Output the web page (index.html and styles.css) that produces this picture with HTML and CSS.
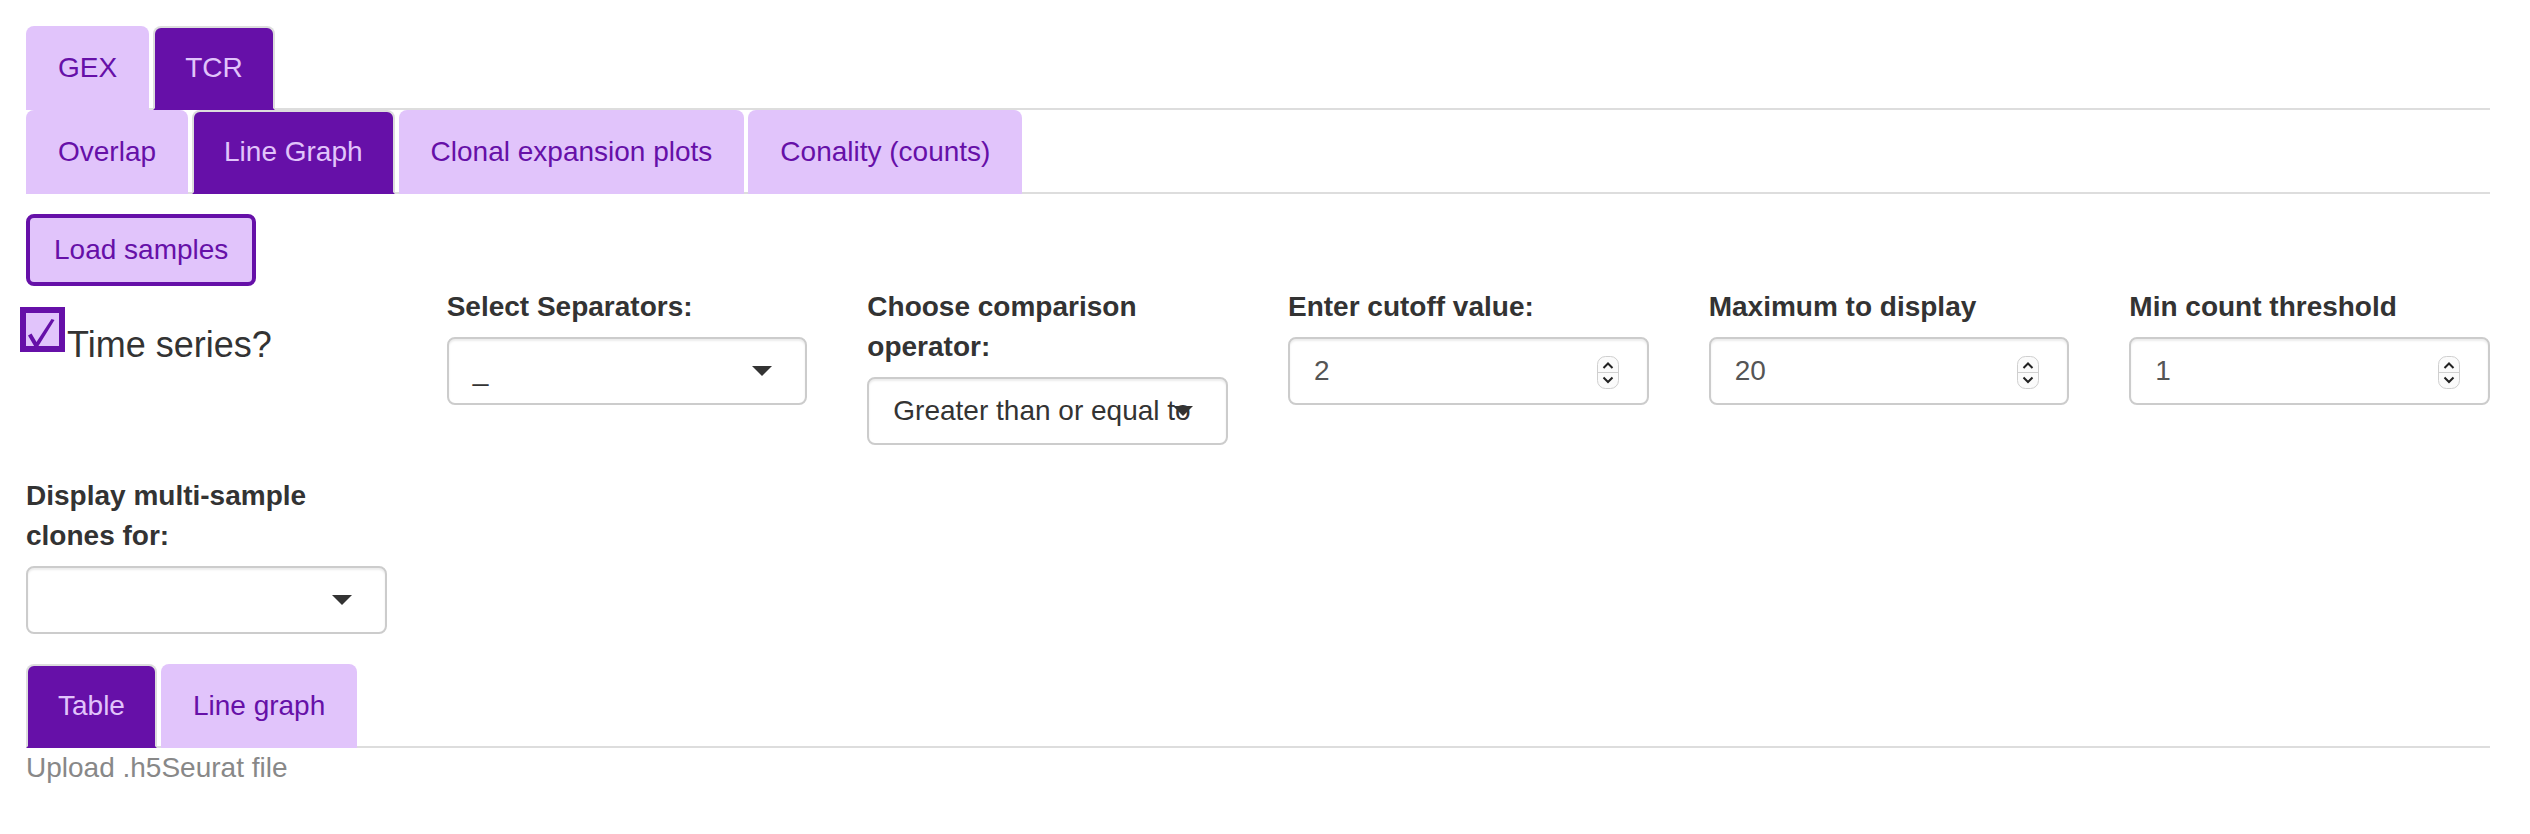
FILE: index.html
```html
<!DOCTYPE html>
<html lang="en">
<head>
<meta charset="utf-8">
<title>TCR Line Graph</title>
<link rel="stylesheet" href="styles.css">
</head>
<body>
<div class="page">
  <ul class="tabs">
    <li class="tab"><a>GEX</a></li>
    <li class="tab active"><a>TCR</a></li>
  </ul>
  <ul class="tabs">
    <li class="tab"><a>Overlap</a></li>
    <li class="tab active"><a>Line Graph</a></li>
    <li class="tab"><a>Clonal expansion plots</a></li>
    <li class="tab"><a>Conality (counts)</a></li>
  </ul>
  <div class="pane">
    <button class="btn-load">Load samples</button>
    <div class="fields">
      <div class="col">
        <div class="ts">
          <svg class="cbox" width="45" height="45" viewBox="0 0 45 45"><rect x="3" y="3" width="39" height="39" fill="#e1c4fb" stroke="#6610a8" stroke-width="6"/><path d="M8 28.5 L11.5 26.5 L16.5 35 L31.5 12 L34.5 13 L17.5 40.5 L15 40.5 Z" fill="#6610a8"/></svg><span class="ts-label">Time series?</span>
        </div>
      </div>
      <div class="col">
        <div class="group">
          <label class="lbl">Select Separators:</label>
          <div class="sel"><span class="item">_</span><i class="caret"></i></div>
        </div>
      </div>
      <div class="col">
        <div class="group">
          <label class="lbl">Choose comparison operator:</label>
          <div class="sel"><span class="item">Greater than or equal to</span><i class="caret"></i></div>
        </div>
      </div>
      <div class="col">
        <div class="group">
          <label class="lbl">Enter cutoff value:</label>
          <div class="num"><span class="val">2</span>
            <svg class="spin" width="22" height="33" viewBox="0 0 22 33"><rect x="0.5" y="0.5" width="21" height="32" rx="8" fill="#fbfbfb" stroke="#cfcfcf"/><line x1="1" y1="16.5" x2="21" y2="16.5" stroke="#cfcfcf"/><path d="M6.5 12 L11 7.5 L15.5 12" fill="none" stroke="#222" stroke-width="2"/><path d="M6.5 21.5 L11 26 L15.5 21.5" fill="none" stroke="#222" stroke-width="2"/></svg>
          </div>
        </div>
      </div>
      <div class="col">
        <div class="group">
          <label class="lbl">Maximum to display</label>
          <div class="num"><span class="val">20</span>
            <svg class="spin" width="22" height="33" viewBox="0 0 22 33"><rect x="0.5" y="0.5" width="21" height="32" rx="8" fill="#fbfbfb" stroke="#cfcfcf"/><line x1="1" y1="16.5" x2="21" y2="16.5" stroke="#cfcfcf"/><path d="M6.5 12 L11 7.5 L15.5 12" fill="none" stroke="#222" stroke-width="2"/><path d="M6.5 21.5 L11 26 L15.5 21.5" fill="none" stroke="#222" stroke-width="2"/></svg>
          </div>
        </div>
      </div>
      <div class="col">
        <div class="group">
          <label class="lbl">Min count threshold</label>
          <div class="num"><span class="val">1</span>
            <svg class="spin" width="22" height="33" viewBox="0 0 22 33"><rect x="0.5" y="0.5" width="21" height="32" rx="8" fill="#fbfbfb" stroke="#cfcfcf"/><line x1="1" y1="16.5" x2="21" y2="16.5" stroke="#cfcfcf"/><path d="M6.5 12 L11 7.5 L15.5 12" fill="none" stroke="#222" stroke-width="2"/><path d="M6.5 21.5 L11 26 L15.5 21.5" fill="none" stroke="#222" stroke-width="2"/></svg>
          </div>
        </div>
      </div>
      <div class="col">
        <div class="group">
          <label class="lbl">Display multi-sample clones for:</label>
          <div class="sel"><span class="item"></span><i class="caret"></i></div>
        </div>
      </div>
    </div>
    <ul class="tabs">
      <li class="tab active"><a>Table</a></li>
      <li class="tab"><a>Line graph</a></li>
    </ul>
    <div class="note">Upload .h5Seurat file</div>
  </div>
</div>
</body>
</html>
```

FILE: styles.css
```css
* { box-sizing: border-box; }

html, body {
  margin: 0;
  padding: 0;
  background: #fff;
}

body {
  font-family: "Liberation Sans", Arial, sans-serif;
  font-size: 28px;
  line-height: 40px;
  color: #333;
}

.page {
  width: 2464px;
  margin-left: 26px;
  padding-top: 26px;
}

.tabs {
  display: flex;
  list-style: none;
  margin: 0;
  padding: 0;
  border-bottom: 2px solid #ddd;
}

.tab {
  margin-bottom: -2px;
}

.tab a {
  display: block;
  padding: 20px 30px;
  margin-right: 4px;
  border: 2px solid transparent;
  border-radius: 8px 8px 0 0;
  background: #e1c4fb;
  color: #6610a8;
  line-height: 40px;
  cursor: pointer;
}

.tab.active a {
  background: #6610a8;
  color: #e1c4fb;
  border-color: #ddd #ddd transparent;
}

.btn-load {
  display: block;
  margin-top: 20px;
  padding: 12px 24px;
  border: 4px solid #6610a8;
  border-radius: 8px;
  background: #e1c4fb;
  color: #6610a8;
  font-family: inherit;
  font-size: 28px;
  line-height: 40px;
}

.fields {
  display: grid;
  grid-template-columns: repeat(6, 1fr);
  margin: 0 -30px;
}

.col {
  padding: 0 30px;
  min-width: 0;
}

.group {
  margin-bottom: 30px;
}

.lbl {
  display: block;
  font-weight: 700;
  margin-top: 1px;
  margin-bottom: 10px;
}

.ts {
  display: flex;
  align-items: flex-start;
  margin-top: 21px;
  margin-left: -6px;
}

.cbox {
  display: block;
  flex: none;
  overflow: visible;
}

.ts-label {
  margin-left: 2px;
  margin-top: 12px;
  font-size: 36px;
  line-height: 52px;
  color: #333;
}

.sel {
  position: relative;
  display: flex;
  align-items: center;
  height: 68px;
  padding: 0 24px;
  border: 2px solid #ccc;
  border-radius: 8px;
  box-shadow: inset 0 2px 2px rgba(0, 0, 0, 0.08);
  background: #fff;
  color: #333;
  white-space: nowrap;
}

.caret {
  position: absolute;
  right: 33px;
  top: 27px;
  width: 0;
  height: 0;
  border-style: solid;
  border-width: 10px 10px 0 10px;
  border-color: #333 transparent transparent transparent;
}

.num {
  display: flex;
  align-items: center;
  height: 68px;
  padding: 0 28px 0 24px;
  border: 2px solid #ccc;
  border-radius: 8px;
  box-shadow: inset 0 2px 2px rgba(0, 0, 0, 0.075);
  background: #fff;
  color: #555;
}

.val {
  flex: 1;
}

.spin {
  display: block;
  flex: none;
  margin-top: 2px;
}

.note {
  color: #888;
  line-height: 40px;
}
```
